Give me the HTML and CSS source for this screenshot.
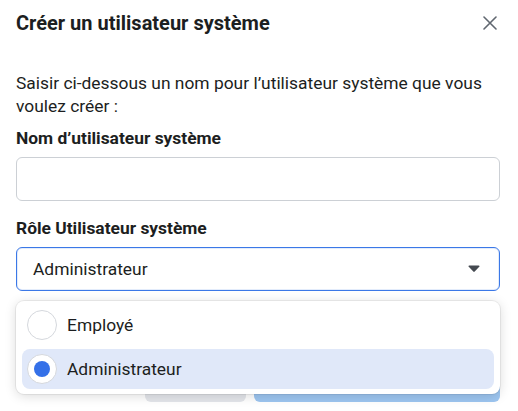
FILE: index.html
```html
<!DOCTYPE html>
<html lang="fr">
<head>
<meta charset="utf-8">
<link rel="stylesheet" href="styles.css">
</head>
<body>
<div class="dialog">
  <div class="header">
    <h1 class="title">Créer un utilisateur système</h1>
    <svg class="close" width="14" height="14" viewBox="0 0 14 14"><path d="M1 1L13 13M13 1L1 13" stroke="#606770" stroke-width="1.6" fill="none" stroke-linecap="round"/></svg>
  </div>
  <div class="body">
    <p class="desc">Saisir ci-dessous un nom pour l’utilisateur système que vous voulez créer :</p>
    <div class="label">Nom d’utilisateur système</div>
    <div class="input"></div>
    <div class="label label2">Rôle Utilisateur système</div>
    <div class="select">
      <span>Administrateur</span>
      <svg class="caret" width="12" height="8" viewBox="0 0 12 8"><path d="M0.5 1.2Q0.5 0.5 1.3 0.5H10.7Q11.5 0.5 11.5 1.2Q11.5 1.6 11 2.1L6.7 6.6Q6 7.3 5.3 6.6L1 2.1Q0.5 1.6 0.5 1.2Z" fill="#444950"/></svg>
    </div>
    <div class="footer">
      <div class="btn btn-cancel">Annuler</div>
      <div class="btn btn-primary">Créer</div>
    </div>
  </div>
  <div class="menu">
    <div class="option">
      <span class="radio"></span>
      <span class="opt-text">Employé</span>
    </div>
    <div class="option selected">
      <span class="radio"><span class="dot"></span></span>
      <span class="opt-text">Administrateur</span>
    </div>
  </div>
</div>
</body>
</html>
```
FILE: styles.css
```css
* { box-sizing: border-box; }
html, body { margin: 0; padding: 0; background: #fff; }
body {
  font-family: Roboto, "Liberation Sans", Arial, sans-serif;
  color: #1c1e21;
  width: 518px;
  height: 411px;
  overflow: hidden;
}
.dialog { position: relative; width: 518px; height: 411px; }
.header {
  height: 46px;
  display: flex;
  align-items: center;
  justify-content: space-between;
  padding: 0 21px 0 16px;
}
.title {
  margin: 0;
  font-size: 20px;
  font-weight: 700;
}
.close { display: block; }
.body { padding: 26px 18px 0 16px; }
.desc {
  margin: 0;
  font-size: 17.4px;
  line-height: 23px;
  padding-right: 4px;
}
.label {
  font-size: 17.4px;
  font-weight: 700;
  line-height: 21px;
  margin-top: 10px;
  color: #1c1e21;
}
.input {
  margin-top: 8px;
  height: 44px;
  border: 1px solid #ccd0d5;
  border-radius: 6px;
}
.label2 { margin-top: 17px; }
.select {
  margin-top: 8px;
  height: 44px;
  border: 1px solid #3b78e7;
  box-shadow: inset 0 0 0 1px #e3ecfb;
  border-radius: 6px;
  display: flex;
  align-items: center;
  justify-content: space-between;
  padding: 0 19px 0 16px;
  font-size: 17.4px;
}
.caret { display: block; }
.footer {
  margin-top: 75px;
  display: flex;
  justify-content: flex-end;
  gap: 8px;
}
.btn {
  height: 36px;
  border-radius: 6px;
  display: flex;
  align-items: center;
  justify-content: center;
  font-size: 15px;
  font-weight: 700;
}
.btn-cancel { width: 101px; background: #e4e6eb; color: #4b4f56; }
.btn-primary { width: 246px; background: #9dc6f1; color: #fff; }
.menu {
  position: absolute;
  left: 16px;
  top: 301px;
  width: 484px;
  height: 93px;
  background: #fff;
  border-radius: 8px;
  box-shadow: 0 0 0 1px rgba(0,0,0,0.06), 0 2px 12px rgba(0,0,0,0.15);
  padding: 4px 6px 5px;
  display: flex;
  flex-direction: column;
  gap: 4px;
}
.option {
  height: 40px;
  border-radius: 8px;
  display: flex;
  align-items: center;
  padding-left: 5px;
  gap: 10px;
  font-size: 17.4px;
}
.option.selected { background: #e0e8f9; }
.radio {
  width: 30px;
  height: 30px;
  border-radius: 50%;
  border: 1px solid #d5d8dd;
  background: #fff;
  display: flex;
  align-items: center;
  justify-content: center;
}
.dot {
  width: 16px;
  height: 16px;
  border-radius: 50%;
  background: #3470e8;
}
.opt-text { color: #1c1e21; }
```
